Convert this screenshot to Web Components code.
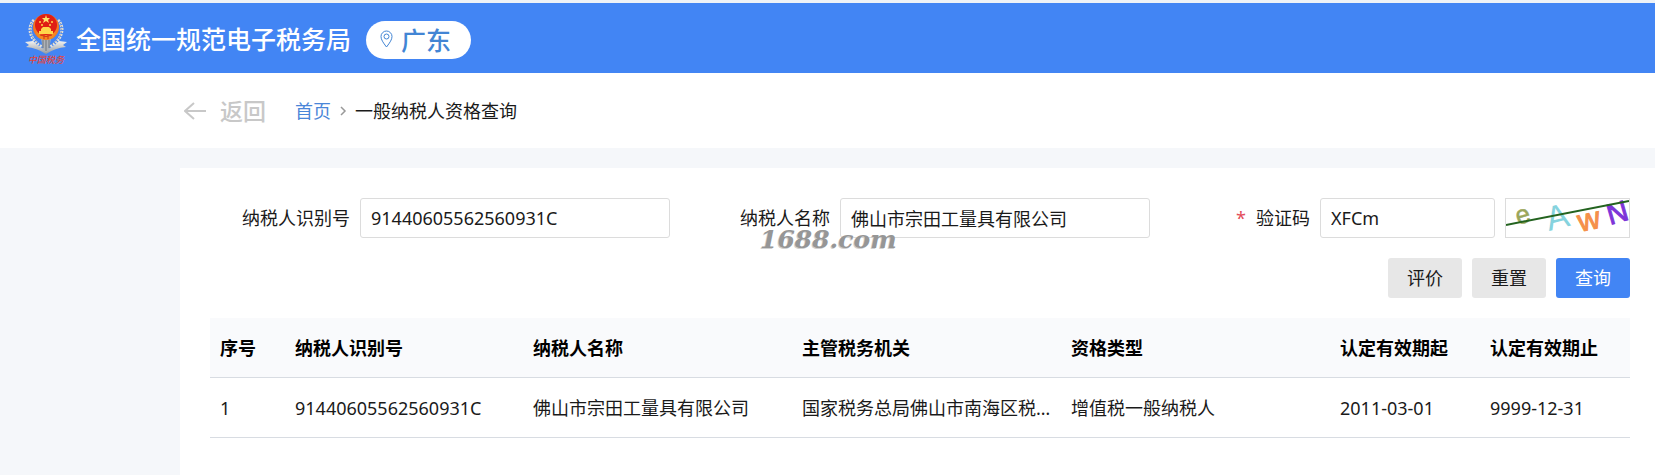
<!DOCTYPE html>
<html lang="zh-CN">
<head>
<meta charset="utf-8">
<title>一般纳税人资格查询</title>
<style>
  body {
    margin: 0;
    background-color: #f5f7fa;
    color: #1a1a1a;
    font-family: "Noto Sans", "Noto Sans CJK SC", sans-serif;
    font-size: 18px;
    line-height: 24px;
    overflow-x: hidden;
  }
</style>
</head>
<body>
<tax-app></tax-app>

<script>
class TaxHeader extends HTMLElement {
    constructor() {
        super();
        this.shadowDOM = this.attachShadow({ mode: "open" });
    }
    connectedCallback() {
        this.render();
    }
    render() {
        this.shadowDOM.innerHTML = `
      <style>
        :host {
            display: flex;
            align-items: center;
            height: 70px;
            padding: 0 24px;
            border-top: 3px solid #eef2f7;
            background-color: #4285f4;
            color: #ffffff;
        }
        .logo {
            width: 44px;
            height: 56px;
            flex: none;
        }
        h1 {
            margin: 0 15px 0 8px;
            font-size: 25px;
            line-height: 36px;
            font-weight: 500;
            font-family: "Noto Sans CJK SC", sans-serif;
            white-space: nowrap;
        }
        .region {
            display: flex;
            align-items: center;
            gap: 8px;
            height: 38px;
            margin-top: 4px;
            padding: 0 20px 2px 14px;
            border: 0;
            border-radius: 19px;
            background-color: #ffffff;
            color: #4285d4;
            font: 500 25px/36px "Noto Sans CJK SC", sans-serif;
            white-space: nowrap;
            cursor: pointer;
        }
      </style>
      <svg class="logo" viewBox="0 0 44 56" role="img" aria-label="中国税务">
        <defs>
          <radialGradient id="gold" cx="50%" cy="55%" r="55%">
            <stop offset="0" stop-color="#ffb52b"/>
            <stop offset="1" stop-color="#ef6b20"/>
          </radialGradient>
          <linearGradient id="silver" x1="0" y1="0" x2="0" y2="1">
            <stop offset="0" stop-color="#f4f4f2"/>
            <stop offset="1" stop-color="#92979f"/>
          </linearGradient>
        </defs>
        <g fill="none" stroke="#e2e0dc" stroke-width="3" stroke-dasharray="2 1">
          <path d="M10 10C3 17 5 29 18 37"/>
          <path d="M34 10C41 17 39 29 26 37"/>
        </g>
        <g fill="none" stroke="#8a8988" stroke-width="1" stroke-dasharray="1 2">
          <path d="M8 13C4 20 7 29 16 34"/>
          <path d="M36 13C40 20 37 29 28 34"/>
        </g>
        <path d="M1 32L9 31Q15 38 22 39Q29 38 35 31L43 32L39 35L42 37Q31 38 22 44Q13 38 2 37L5 35Z" fill="url(#silver)"/>
        <path d="M17 28H27L25 40L22 42L19 40Z" fill="#aeb2b8"/>
        <path d="M19 30V38M22 30V41M25 30V38" stroke="#71767e"/>
        <circle cx="22" cy="17" r="13" fill="url(#gold)"/>
        <circle cx="22" cy="15" r="11" fill="#e01e14"/>
        <path d="M22 5L23 8H26L24 10L25 13L22 11L19 13L20 10L18 8H21Z" fill="#ffe169"/>
        <g fill="#ffd64a">
          <circle cx="16" cy="12" r="1"/><circle cx="28" cy="12" r="1"/>
          <circle cx="18" cy="15" r="1"/><circle cx="26" cy="15" r="1"/>
          <path d="M17 19L19 17H25L27 19V21H29V24H15V21H17Z"/>
        </g>
        <path d="M12 23Q22 27 32 23L29 28Q22 31 15 28Z" fill="#f38a20"/>
        <path d="M16 25Q22 28 28 25M20 25V29M24 25V29" fill="none" stroke="#d32d16"/>
        <text x="22" y="53" text-anchor="middle" font-size="9" font-style="italic" font-weight="500" fill="#e2443c" font-family="Noto Sans CJK SC, sans-serif">中国税务</text>
      </svg>
      <h1><slot></slot></h1>
      <button class="region" type="button">
        <svg width="13" height="18" viewBox="0 0 13 18" fill="none" stroke="#4285d4" aria-hidden="true">
          <path d="M6.500 17C3 12.500 1 9.500 1 6.500A5.500 5.500 0 0 1 12 6.500C12 9.500 10 12.500 6.500 17Z"/>
          <circle cx="6.500" cy="6.500" r="2.500"/>
        </svg>
        <slot name="region"></slot>
      </button>
    `;
    }
}
customElements.define("tax-header", TaxHeader);

class TaxBreadcrumb extends HTMLElement {
    constructor() {
        super();
        this.shadowDOM = this.attachShadow({ mode: "open" });
    }
    connectedCallback() {
        this.render();
    }
    render() {
        this.shadowDOM.innerHTML = `
      <style>
        :host {
            display: flex;
            align-items: center;
            height: 75px;
            padding-left: 184px;
            background-color: #ffffff;
            white-space: nowrap;
        }
        a {
            text-decoration: none;
        }
        .back {
            display: flex;
            align-items: center;
            gap: 14px;
            margin-right: 29px;
            color: #c8c8c8;
            font-size: 23px;
            font-weight: 500;
        }
        nav {
            display: flex;
            align-items: center;
            gap: 8px;
        }
        .home {
            color: #4a86d8;
        }
      </style>
      <a class="back" href="#back">
        <svg width="22" height="18" viewBox="0 0 22 18" fill="none" stroke="#c8c8c8" stroke-width="2" aria-hidden="true">
          <path d="M22 9H1M10 1L1 9L10 17"/>
        </svg>
        返回
      </a>
      <nav>
        <a class="home" href="#home">首页</a>
        <svg width="8" height="10" viewBox="0 0 8 10" fill="none" stroke="#999999" stroke-width="1.500" aria-hidden="true">
          <path d="M2 1L6 5L2 9"/>
        </svg>
        <span><slot></slot></span>
      </nav>
    `;
    }
}
customElements.define("tax-breadcrumb", TaxBreadcrumb);

class FormField extends HTMLElement {
    constructor() {
        super();
        this.shadowDOM = this.attachShadow({ mode: "open" });
    }
    connectedCallback() {
        this.render();
    }
    render() {
        const label = this.getAttribute("label");
        const value = this.getAttribute("value");
        const star = this.hasAttribute("required") ? '<span class="star">*</span>' : "";
        this.shadowDOM.innerHTML = `
      <style>
        :host {
            display: flex;
            align-items: center;
            gap: 10px;
            min-width: 0;
        }
        label {
            flex: none;
            width: 140px;
            text-align: right;
            white-space: nowrap;
        }
        .star {
            margin-right: 10px;
            color: #e34d59;
        }
        input {
            box-sizing: border-box;
            flex: 1;
            min-width: 0;
            height: 40px;
            padding: 0 10px;
            border: 1px solid #dcdcdc;
            border-radius: 3px;
            background-color: #ffffff;
            color: inherit;
            font: inherit;
        }
      </style>
      <label for="field">${star}${label}</label>
      <input id="field" type="text" value="${value}">
      <slot></slot>
    `;
    }
}
customElements.define("form-field", FormField);

class CaptchaImage extends HTMLElement {
    constructor() {
        super();
        this.shadowDOM = this.attachShadow({ mode: "open" });
    }
    connectedCallback() {
        this.render();
    }
    render() {
        this.shadowDOM.innerHTML = `
      <style>
        :host {
            display: block;
            flex: none;
        }
        button {
            display: block;
            padding: 0;
            border: 1px solid #dcdcdc;
            background-color: #ffffff;
            cursor: pointer;
        }
        svg {
            display: block;
            font-family: "Liberation Sans", sans-serif;
        }
      </style>
      <button type="button" aria-label="刷新验证码">
        <svg width="123" height="38" viewBox="0 0 123 38">
          <text font-size="26" fill="#9aa65a" stroke="#9aa65a" transform="translate(12 26) rotate(-16)" stroke-width="0.500">e</text>
          <text font-size="34" fill="#86d3de" transform="translate(43 32) rotate(-14)">A</text>
          <text font-size="31" fill="#f5904a" stroke="#f5904a" transform="translate(74 33) rotate(-12)">w</text>
          <text font-size="29" fill="#7d35d8" stroke="#7d35d8" transform="translate(104 26) rotate(-16)">N</text>
          <path d="M0 26L123 2" stroke="#23631f" stroke-width="2"/>
        </svg>
      </button>
    `;
    }
}
customElements.define("captcha-image", CaptchaImage);

class ActionButton extends HTMLElement {
    constructor() {
        super();
        this.shadowDOM = this.attachShadow({ mode: "open" });
    }
    connectedCallback() {
        this.render();
    }
    render() {
        this.shadowDOM.innerHTML = `
      <style>
        :host {
            display: block;
        }
        button {
            height: 40px;
            padding: 0 19px;
            border: 0;
            border-radius: 3px;
            background-color: #e7e7e7;
            color: #1a1a1a;
            font: inherit;
            cursor: pointer;
        }
        :host([primary]) button {
            background-color: #4285f4;
            color: #ffffff;
        }
      </style>
      <button type="button"><slot></slot></button>
    `;
    }
}
customElements.define("action-button", ActionButton);

class ResultTable extends HTMLElement {
    constructor() {
        super();
        this.shadowDOM = this.attachShadow({ mode: "open" });
        this.columns = ["序号", "纳税人识别号", "纳税人名称", "主管税务机关", "资格类型", "认定有效期起", "认定有效期止"];
        this.rows = [
            ["1", "91440605562560931C", "佛山市宗田工量具有限公司", "国家税务总局佛山市南海区税务局", "增值税一般纳税人", "2011-03-01", "9999-12-31"]
        ];
    }
    connectedCallback() {
        this.render();
    }
    render() {
        const head = this.columns.map(c => `<th scope="col">${c}</th>`).join("");
        const body = this.rows.map(r => `<tr>${r.map(c => `<td>${c}</td>`).join("")}</tr>`).join("");
        this.shadowDOM.innerHTML = `
      <style>
        :host {
            display: block;
        }
        table {
            width: 100%;
            table-layout: fixed;
            border-spacing: 0;
        }
        .index {
            width: 75px;
        }
        .code {
            width: 238px;
        }
        .date {
            width: 150px;
        }
        th, td {
            box-sizing: border-box;
            height: 60px;
            padding: 0 8px 0 10px;
            border-bottom: 1px solid #d8dce2;
            text-align: left;
            white-space: nowrap;
            overflow: hidden;
            text-overflow: ellipsis;
        }
        th {
            background-color: #f9fafc;
            color: #000000;
            font-weight: 700;
        }
      </style>
      <table>
        <colgroup>
          <col class="index"><col class="code"><col><col><col><col class="date"><col class="date">
        </colgroup>
        <thead><tr>${head}</tr></thead>
        <tbody>${body}</tbody>
      </table>
    `;
    }
}
customElements.define("result-table", ResultTable);

class TaxApp extends HTMLElement {
    constructor() {
        super();
        this.shadowDOM = this.attachShadow({ mode: "open" });
    }
    connectedCallback() {
        this.render();
    }
    render() {
        this.shadowDOM.innerHTML = `
      <style>
        :host {
            display: flex;
            flex-direction: column;
            min-height: 100vh;
        }
        main {
            flex: 1;
            position: relative;
            margin: 20px 0 0 180px;
            padding: 30px 25px 30px 30px;
            background-color: #ffffff;
        }
        .fields {
            display: grid;
            grid-template-columns: repeat(3, minmax(0, 1fr));
            gap: 20px;
        }
        .actions {
            display: flex;
            justify-content: flex-end;
            gap: 10px;
            margin: 20px 0;
        }
        .watermark {
            position: absolute;
            top: 58px;
            left: 580px;
            color: #969696;
            font: italic 700 25px/28px "DejaVu Serif", serif;
            text-shadow: -1px 1px 0 #d0d0d0;
            pointer-events: none;
        }
      </style>
      <tax-header>全国统一规范电子税务局<span slot="region">广东</span></tax-header>
      <tax-breadcrumb>一般纳税人资格查询</tax-breadcrumb>
      <main>
        <div class="fields">
          <form-field label="纳税人识别号" value="91440605562560931C"></form-field>
          <form-field label="纳税人名称" value="佛山市宗田工量具有限公司"></form-field>
          <form-field label="验证码" value="XFCm" required><captcha-image></captcha-image></form-field>
        </div>
        <div class="actions">
          <action-button>评价</action-button>
          <action-button>重置</action-button>
          <action-button primary>查询</action-button>
        </div>
        <result-table></result-table>
        <span class="watermark">1688.com</span>
      </main>
    `;
    }
}
customElements.define("tax-app", TaxApp);
</script>
</body>
</html>
